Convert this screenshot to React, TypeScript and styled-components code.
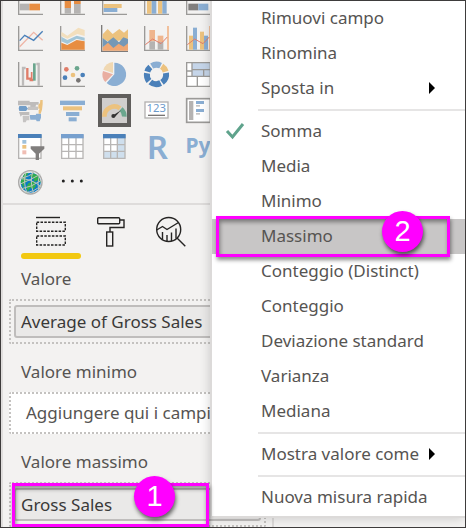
import React from "react";
import styled, { createGlobalStyle, css } from "styled-components";

const GlobalStyle = createGlobalStyle`
  * { box-sizing: border-box; }
  body { margin: 0; background: #fff; }
  button { font: inherit; color: inherit; }
`;

const GREY = "#9b9a98";
const BLUE = "#8aaed3";
const DEEP = "#4a80b9";
const GOLD = "#ecc27e";
const ORANGE = "#e78d42";
const PEACH = "#f0a772";
const GREEN = "#6ba68e";
const RED = "#e07d69";
const MAGENTA = "#ff00ff";

const Page = styled.main`
  position: relative;
  min-height: 100vh;
  overflow: hidden;
  border: 1px solid #3e3c3c;
  background: #f3f2f1;
  color: #565452;
  font-family: "Noto Sans", "Open Sans", sans-serif;
  font-size: 17px;
  line-height: 24px;
`;

const Pane = styled.aside`
  width: 273px;
  padding-left: 8px;
  border-left: 2px solid #e0dedd;
  border-right: 2px solid #dcdad9;
`;

const Gallery = styled.section`
  display: grid;
  grid-template-columns: repeat(5, 42px);
  grid-auto-rows: 36px;
  align-content: end;
  height: 199px;
  margin-left: -2px;
  overflow: hidden;
`;

const VisualButton = styled.button<{ $selected?: boolean }>`
  display: flex;
  align-items: center;
  justify-content: center;
  place-self: center;
  width: 33px;
  height: 33px;
  padding: 0;
  border: 4px solid transparent;
  background: none;
  ${(p) =>
    p.$selected &&
    css`
      border-color: #605e5c;
      background: #d0cecd;
    `}
  svg {
    flex: none;
    display: block;
    overflow: visible;
  }
`;

const Tabs = styled.nav`
  display: flex;
  height: 58px;
  margin: 3px 0 6px -8px;
  padding: 11px 0 0 18px;
  border-top: 2px solid #dedcdb;
`;

const Tab = styled.button<{ $active?: boolean }>`
  display: flex;
  flex-direction: column;
  align-items: center;
  gap: 6px;
  width: 60px;
  height: 44px;
  padding: 0;
  border: 0;
  background: none;
  svg {
    flex: none;
  }
  &::after {
    content: "";
    width: 60px;
    height: 6px;
    border-radius: 3px;
    background: ${(p) => (p.$active ? "#f2c811" : "transparent")};
  }
`;

const Field = styled.section`
  margin: 0 6px 16px -2px;
  &:last-child {
    margin-bottom: 0;
  }
`;

const FieldName = styled.h2`
  margin: 0;
  padding: 0 12px 8px;
  font-size: 17px;
  font-weight: 400;
  line-height: 24px;
`;

const Well = styled.div<{ $empty?: boolean }>`
  position: relative;
  padding: ${(p) => (p.$empty ? "7px 15px" : "4px 3px")};
  border: 2px dotted #c4c2c0;
  border-radius: 2px;
  background: ${(p) => (p.$empty ? "#fff" : "transparent")};
  white-space: nowrap;
`;

const Chip = styled.button`
  display: block;
  width: 100%;
  height: 33px;
  padding: 0 5px;
  border: 2px solid #bfbdbc;
  border-radius: 3px;
  background: #eae9e8;
  color: #3a3938;
  text-align: left;
`;

const Menu = styled.div`
  position: absolute;
  top: 0;
  left: 211px;
  right: 0;
  padding-bottom: 1px;
  background: #fff;
  box-shadow: 0 0 0 2px #dcdad9, -2px 2px 10px rgba(0, 0, 0, 0.18);
`;

const MenuItem = styled.button<{ $current?: boolean }>`
  position: relative;
  display: flex;
  align-items: center;
  width: 100%;
  height: 35px;
  padding: 0 30px 2px 49px;
  border: 0;
  background: ${(p) => (p.$current ? "#c8c6c6" : "transparent")};
  text-align: left;
  white-space: nowrap;
`;

const ItemLabel = styled.span`
  flex: 1;
`;

const CheckIcon = styled.svg`
  width: 20px;
  height: 18px;
  margin: 0 16px 0 -36px;
`;

const ArrowIcon = styled.svg`
  width: 6px;
  height: 12px;
`;

const Separator = styled.hr`
  height: 2px;
  margin: 3px 0 3px 46px;
  border: 0;
  background: #e6e5e5;
`;

const Callout = styled.span<{ $where: "menu" | "chip" }>`
  position: absolute;
  z-index: 2;
  pointer-events: none;
  border: 3px solid ${MAGENTA};
  box-shadow: 1px 3px 4px rgba(0, 0, 0, 0.45), inset 1px 3px 4px rgba(0, 0, 0, 0.4);
  ${(p) =>
    p.$where === "menu"
      ? css`
          inset: -3px 15px -3px 4px;
        `
      : css`
          top: -1px;
          left: 1px;
          width: 197px;
          height: 44px;
        `}
`;

const Step = styled.span<{ $where: "menu" | "chip" }>`
  position: absolute;
  top: ${(p) => (p.$where === "menu" ? "-8px" : "-10px")};
  right: ${(p) => (p.$where === "menu" ? "24px" : "31px")};
  width: 41px;
  height: 41px;
  border-radius: 50%;
  background: ${MAGENTA};
  box-shadow: 1px 3px 4px rgba(0, 0, 0, 0.6);
  color: #fff;
  font-family: "Liberation Sans", Arial, sans-serif;
  font-size: 29px;
  line-height: 41px;
  text-align: center;
`;

/* Drawings use a 75-unit square shown at 25px. */
const Draw = ({ children }: { children: React.ReactNode }) => (
  <svg width="25" height="25" viewBox="0 0 75 75" fill="none" aria-hidden="true">
    {children}
  </svg>
);
const Axis = () => <path d="M2 0V73H75" stroke={GREY} strokeWidth="4" />;
type BarSpec = [number, number, number, number, string];
const Bars = ({ of }: { of: BarSpec[] }) => (
  <>
    {of.map(([x, y, w, h, fill], i) => (
      <rect key={i} x={x} y={y} width={w} height={h} fill={fill} />
    ))}
  </>
);

const visuals: { name: string; art: React.ReactNode; selected?: boolean }[] = [
  { name: "Barre in pila", art: <><Axis /><Bars of={[[5, 41, 29, 20, "#b5b3b2"], [34, 41, 32, 20, ORANGE], [5, 20, 40, 12, "#f0c9c0"]]} /></> },
  { name: "Istogramma in pila", art: <><Axis /><Bars of={[[14, 18, 19, 36, ORANGE], [14, 54, 19, 17, "#b5b3b2"], [42, 10, 20, 32, ORANGE], [42, 42, 20, 29, "#b5b3b2"]]} /></> },
  { name: "Barre raggruppate", art: <><Axis /><Bars of={[[5, 42, 54, 12, GOLD], [5, 54, 41, 12, BLUE]]} /></> },
  { name: "Istogramma raggruppato", art: <><Axis /><Bars of={[[9, 20, 14, 51, GOLD], [23, 10, 14, 61, BLUE], [42, 10, 13, 61, GOLD], [55, 10, 13, 61, BLUE]]} /></> },
  { name: "Barre in pila 100%", art: <><Axis /><Bars of={[[7, 41, 30, 20, "#817f7e"], [37, 41, 30, 20, BLUE], [7, 20, 60, 12, "#e3e2e2"]]} /></> },

  { name: "Grafico a linee", art: <><Axis /><path d="M5 62L47 19L74 43" stroke="#eeb5a6" strokeWidth="4" /><path d="M5 44L20 28L47 43L74 16" stroke={DEEP} strokeWidth="4" /></> },
  { name: "Grafico ad area", art: <><Axis /><path d="M4 17L22 29L55 5L74 12V30L52 24L22 38L4 30Z" fill="#f3dfbd" /><path d="M4 32L22 42L50 29L74 35V44L50 38L22 54L4 46Z" fill="#a3c6d8" /><path d="M4 50L22 57L50 42L74 46V71H4Z" fill={ORANGE} /></> },
  { name: "Area in pila", art: <><path d="M-1 -3V76H78" stroke="#7d7b7a" strokeWidth="4" /><path d="M2 25L17 9L32 24L52 9L66 20L78 10V38L50 44L18 46L2 38Z" fill={GOLD} /><path d="M2 64L18 48L34 62L50 51L65 58L78 50V74H2Z" fill={PEACH} /><path d="M2 36L17 47L34 34L51 49L64 34L78 39V52L65 62L50 53L34 66L18 50L2 64Z" fill="#7598b6" /></> },
  { name: "Linee e istogramma in pila", art: <><Axis /><Bars of={[[16, 12, 17, 34, "#efb58e"], [16, 46, 17, 25, "#b5b3b2"], [41, 29, 17, 19, "#efb58e"], [41, 48, 17, 23, "#b5b3b2"]]} /><path d="M4 56L26 39L51 53L70 33" stroke={RED} strokeWidth="3" /><path d="M72 0V71" stroke={PEACH} strokeWidth="4" /></> },
  { name: "Linee e istogramma raggruppato", art: <><Axis /><Bars of={[[9, 29, 12, 42, GOLD], [21, 5, 12, 66, BLUE], [42, 17, 12, 54, GOLD], [54, 29, 12, 42, BLUE]]} /><path d="M4 56L26 39L51 53L70 33" stroke={RED} strokeWidth="3" /><path d="M72 0V71" stroke={PEACH} strokeWidth="4" /></> },

  { name: "Grafico a cascata", art: <><Axis /><path d="M23 18H15V71" stroke="#bdbbba" strokeWidth="7" /><path d="M28 18V50H38V54H46" stroke={RED} strokeWidth="7" /><path d="M41 30V54" stroke={RED} strokeWidth="5" /><path d="M49 4V56" stroke={GREEN} strokeWidth="8" /><path d="M55 6H62V71" stroke="#bdbbba" strokeWidth="7" /></> },
  { name: "Grafico a dispersione", art: <><Axis /><circle cx="19" cy="22" r="7" fill={RED} /><circle cx="51" cy="19" r="7" fill={GREEN} /><circle cx="15" cy="47" r="7" fill={DEEP} /><circle cx="39" cy="39" r="7" fill={GOLD} /><circle cx="68" cy="39" r="7" fill={DEEP} /><circle cx="55" cy="55" r="7" fill="#777574" /></> },
  { name: "Grafico a torta", art: <><path d="M37 37V2A35 35 0 1 1 14 63Z" fill={BLUE} /><path d="M33 37L10 60A33 33 0 0 1 3 27Z" fill="#e9aea1" /><path d="M33 33L4 23A35 35 0 0 1 33 0Z" fill="#f0d8b2" /></> },
  { name: "Grafico ad anello", art: <g strokeWidth="18" fill="none"><path d="M23 12A29 29 0 0 1 50 11" stroke={BLUE} /><path d="M53 13A29 29 0 0 1 65 29" stroke={GOLD} /><path d="M66 33A29 29 0 0 1 54 61M50 63A29 29 0 0 1 19 60M15 57A29 29 0 0 1 9 34M10 29A29 29 0 0 1 19 15" stroke={DEEP} /></g> },
  { name: "Mappa ad albero", art: <><rect x="2" y="2" width="71" height="71" fill="#fff" /><path d="M18 2H73V43H18Z" fill="#c5d5e9" /><path d="M2 2H73V73H2ZM18 2V43M2 43H73M18 23H73M53 23V43M34 43V73M2 27H18" stroke={GREY} strokeWidth="4" /></> },

  { name: "Mappa", art: <><path d="M0 8H35V12H62V20H54L52 30H37V22H0Z" fill="#bebcbb" /><path d="M4 24H24L30 32L24 39H4L2 31Z" fill="#719dc8" /><path d="M30 26H60V36H30Z" fill="#c6c4c3" /><path d="M3 42H34V51H12L8 56Z" fill="#bebcbb" /><path d="M14 53H34V67H26L23 73H15Z" fill="#c6c4c3" /><path d="M35 51H53L55 47H69V59L65 70H56L54 65H37Z" fill={BLUE} /><path d="M67 6H74V18L72 35L68 47H62V37L66 32H61V21L66 15Z" fill={GOLD} /></> },
  { name: "Imbuto", art: <Bars of={[[0, 8, 75, 13, BLUE], [9, 25, 57, 12, GOLD], [18, 42, 40, 12, BLUE], [26, 58, 24, 12, BLUE]]} /> },
  { name: "Misuratore", selected: true, art: <><path d="M7 56A30 30 0 0 1 54 31" stroke={GOLD} strokeWidth="14" /><path d="M57 33A30 30 0 0 1 67 56" stroke={GREEN} strokeWidth="14" /><path d="M57 37L38 58L30 54Z" fill="#333" /><circle cx="34" cy="54" r="6" fill="#333" /></> },
  { name: "Scheda", art: <><rect x="3" y="12" width="69" height="48" fill="#fff" stroke="#b3b1b0" strokeWidth="4" /><text x="37" y="43" fill="#6c9acb" fontSize="34" textAnchor="middle">123</text><path d="M12 52H63" stroke="#777574" strokeWidth="4" /></> },
  { name: "Filtro dei dati", art: <><rect x="2" y="2" width="71" height="71" fill="#fff" stroke={GREY} strokeWidth="5" /><Bars of={[[9, 9, 13, 57, "#b5b3b2"], [30, 9, 24, 9, BLUE], [30, 21, 12, 5, "#c5c3c2"], [30, 33, 24, 9, BLUE], [30, 45, 12, 5, "#c5c3c2"]]} /></> },

  { name: "Filtro", art: <><rect x="2" y="5" width="67" height="68" fill="#fff" stroke="#b5b3b2" strokeWidth="4" /><Bars of={[[0, 0, 71, 12, DEEP], [13, 18, 12, 11, "#9fc1db"], [13, 33, 12, 11, GOLD], [13, 49, 12, 12, "#f0beb4"]]} /><path d="M38 37H79V44L63 59V78H53V59L38 44Z" fill="#807e7d" /></> },
  { name: "Tabella", art: <><path d="M5 2H69V73H5Z" fill="#fff" /><path d="M5 2V73H69V2M26 12V73M48 12V73M5 32H69M5 52H69" stroke="#b8b6b5" strokeWidth="4" /><path d="M3 0H71V13H3Z" fill="#77a0ce" /></> },
  { name: "Matrice", art: <><path d="M5 2H69V73H5Z" fill="#fff" /><path d="M48 12H69V73H5V52H48Z" fill="#cfdfed" /><path d="M5 2V73H69V2M26 12V73M46 12V73M5 32H69M5 52H69" stroke="#b8b6b5" strokeWidth="4" /><path d="M3 0H71V13H3Z" fill={DEEP} /></> },
  { name: "Script R", art: <text x="40" y="74" fontFamily="Noto Sans" fontWeight="600" fontSize="99" textAnchor="middle" fill={BLUE}>R</text> },
  { name: "Script Python", art: <text x="36" y="57" fontFamily="Noto Sans" fontWeight="700" fontSize="63" textAnchor="middle" fill={BLUE}>Py</text> },

  { name: "ArcGIS Maps", art: <><circle cx="37" cy="37" r="35" fill="#e9eae9" stroke="#aaa9a8" strokeWidth="4" /><circle cx="38" cy="38" r="30" fill="#087bc5" /><path d="M8 35L19 11L31 8L22 25L27 34L17 44L20 61ZM43 10L60 16L69 38L58 31L50 37L46 24L35 19ZM31 40L47 34L54 47L47 58L37 53L29 65L25 51Z" fill="#32ad4b" /><path d="M5 43Q36 30 67 13M8 57Q42 51 72 30M20 67Q50 67 69 45M9 24Q33 21 50 5M24 5Q14 36 27 70M45 3Q34 35 47 70M64 15Q57 39 62 63M5 26Q39 25 71 51" stroke="#bbc5bc" strokeWidth="3" /></> },
  { name: "Altre opzioni", art: <><circle cx="10" cy="33" r="4.5" fill="#222" /><circle cx="37" cy="33" r="4.5" fill="#222" /><circle cx="64" cy="33" r="4.5" fill="#222" /></> },
];

const FieldsIcon = () => (
  <svg width="30" height="31" viewBox="0 0 30 31" fill="none" stroke="#252423" strokeWidth="1.4" aria-hidden="true">
    <path d="M0 1.5H24" />
    <path d="M.7 6.2H29.3V15.2H.7ZM.7 20H29.3V29H.7Z" strokeDasharray="2.5 1.3" />
  </svg>
);
const RollerIcon = () => (
  <svg width="28" height="31" viewBox="0 0 28 31" fill="none" stroke="#252423" strokeWidth="1.4" aria-hidden="true">
    <rect x=".7" y="1.7" width="22" height="6" rx="1" />
    <path d="M23 4H27V11.5H13V16" />
    <rect x="9.7" y="16" width="6" height="14" />
  </svg>
);
const AnalyticsIcon = () => (
  <svg width="30" height="31" viewBox="0 0 30 31" fill="none" stroke="#252423" strokeWidth="1.4" aria-hidden="true">
    <circle cx="12.7" cy="13.5" r="12" />
    <path d="M21 22L29.3 30.3M.7 14L6.5 10.5L11 13.5L22.5 6.5M6.5 16V23.5M11 19V25M15.5 16.5V25M20 12.5V22.5" />
  </svg>
);

type Entry = { label: string; checked?: boolean; current?: boolean; submenu?: boolean };
const groups: Entry[][] = [
  [{ label: "Rimuovi campo" }, { label: "Rinomina" }, { label: "Sposta in", submenu: true }],
  [
    { label: "Somma", checked: true },
    { label: "Media" },
    { label: "Minimo" },
    { label: "Massimo", current: true },
    { label: "Conteggio (Distinct)" },
    { label: "Conteggio" },
    { label: "Deviazione standard" },
    { label: "Varianza" },
    { label: "Mediana" },
  ],
  [{ label: "Mostra valore come", submenu: true }],
  [{ label: "Nuova misura rapida" }],
];

export default function App() {
  return (
    <>
      <GlobalStyle />
      <Page>
        <Pane>
          <Gallery aria-label="Visualizzazioni">
            {visuals.map((v) => (
              <VisualButton key={v.name} aria-label={v.name} $selected={v.selected}>
                <Draw>{v.art}</Draw>
              </VisualButton>
            ))}
          </Gallery>
          <Tabs aria-label="Riquadro">
            <Tab $active aria-label="Campi"><FieldsIcon /></Tab>
            <Tab aria-label="Formato"><RollerIcon /></Tab>
            <Tab aria-label="Analisi"><AnalyticsIcon /></Tab>
          </Tabs>
          <Field>
            <FieldName>Valore</FieldName>
            <Well><Chip>Average of Gross Sales</Chip></Well>
          </Field>
          <Field>
            <FieldName>Valore minimo</FieldName>
            <Well $empty>Aggiungere qui i campi</Well>
          </Field>
          <Field>
            <FieldName>Valore massimo</FieldName>
            <Well>
              <Chip>Gross Sales</Chip>
              <Callout $where="chip"><Step $where="chip">1</Step></Callout>
            </Well>
          </Field>
        </Pane>
        <Menu role="menu">
          {groups.map((entries, g) => (
            <React.Fragment key={g}>
              {g > 0 && <Separator />}
              {entries.map((e) => (
                <MenuItem key={e.label} role="menuitem" $current={e.current}>
                  {e.checked && (
                    <CheckIcon viewBox="0 0 20 18" fill="none" aria-hidden="true">
                      <path d="M2 9L7.5 15L18 2" stroke="#5fa38c" strokeWidth="3" />
                    </CheckIcon>
                  )}
                  <ItemLabel>{e.label}</ItemLabel>
                  {e.submenu && (
                    <ArrowIcon viewBox="0 0 6 12" aria-hidden="true"><path d="M0 0L6 6L0 12Z" fill="#000" /></ArrowIcon>
                  )}
                  {e.current && <Callout $where="menu"><Step $where="menu">2</Step></Callout>}
                </MenuItem>
              ))}
            </React.Fragment>
          ))}
        </Menu>
      </Page>
    </>
  );
}
